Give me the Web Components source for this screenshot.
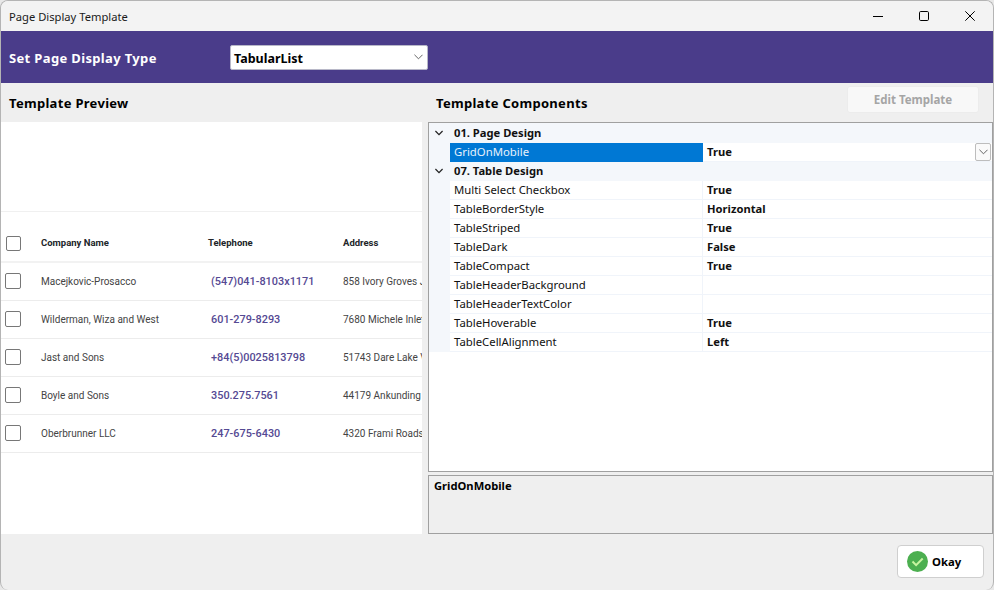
<!DOCTYPE html>
<html><head><meta charset="utf-8"><style>
html,body{margin:0;padding:0;background:#e8e8e8;width:994px;height:590px;overflow:hidden}
</style></head><body>
<app-window>
<title-bar slot="title">Page Display Template</title-bar>
<type-band slot="band" label="Set Page Display Type" value="TabularList"></type-band>
<section-head slot="lhead" style="--pl:8px">Template Preview</section-head>
<section-head slot="rhead" style="--pl:8px" action="Edit Template">Template Components</section-head>
<preview-table slot="preview">
<pv-row name="Macejkovic-Prosacco" tel="(547)041-8103x1171" addr="858 Ivory Groves Junction"></pv-row>
<pv-row name="Wilderman, Wiza and West" tel="601-279-8293" addr="7680 Michele Inlet Suite"></pv-row>
<pv-row name="Jast and Sons" tel="+84(5)0025813798" addr="51743 Dare Lake View"></pv-row>
<pv-row name="Boyle and Sons" tel="350.275.7561" addr="44179 Ankunding Hills"></pv-row>
<pv-row name="Oberbrunner LLC" tel="247-675-6430" addr="4320 Frami Roads Suite"></pv-row>
</preview-table>
<prop-grid slot="grid">
<prop-group style="--h:20px;--pb:1px">01. Page Design</prop-group>
<prop-row name="GridOnMobile" value="True" selected></prop-row>
<prop-group style="--pb:2px">07. Table Design</prop-group>
<prop-row name="Multi Select Checkbox" value="True"></prop-row>
<prop-row name="TableBorderStyle" value="Horizontal"></prop-row>
<prop-row name="TableStriped" value="True"></prop-row>
<prop-row name="TableDark" value="False"></prop-row>
<prop-row name="TableCompact" value="True"></prop-row>
<prop-row name="TableHeaderBackground" value=""></prop-row>
<prop-row name="TableHeaderTextColor" value=""></prop-row>
<prop-row name="TableHoverable" value="True"></prop-row>
<prop-row name="TableCellAlignment" value="Left"></prop-row>
</prop-grid>
<desc-panel slot="desc">GridOnMobile</desc-panel>
<ok-button slot="foot">Okay</ok-button>
</app-window>
<script>
const UI='"Noto Sans","Open Sans",sans-serif';
function def(name,html){
  customElements.define(name,class extends HTMLElement{
    connectedCallback(){
      if(this.shadowRoot)return;
      const r=this.attachShadow({mode:'open'});
      r.innerHTML=typeof html==='function'?html(this):html;
    }
  });
}
const chev=(w=10,c='#555',sw=1)=>`<svg width="${w}" height="6" viewBox="0 0 10 6" style="display:block"><path d="M.5.5 5 5 9.5.5" fill="none" stroke="${c}" stroke-width="${sw}"/></svg>`;
def('app-window',`<style>
:host{display:grid;box-sizing:border-box;width:994px;height:590px;background:#efefef;border:1px solid #b4b4b4;border-bottom:0;border-radius:8px;overflow:hidden;
grid-template-columns:421px 6px 565px;grid-template-rows:30px 52px 39px 350px 3px 59px 1fr;font-family:${UI};color:#000}
::slotted([slot=title]),::slotted([slot=band]){grid-column:1/-1}
::slotted([slot=lhead]){grid-column:1;grid-row:3}
::slotted([slot=rhead]){grid-column:3;grid-row:3}
::slotted([slot=preview]){grid-column:1;grid-row:4/7}
::slotted([slot=grid]){grid-column:3;grid-row:4}
::slotted([slot=desc]){grid-column:3;grid-row:6}
::slotted([slot=foot]){grid-column:1/-1;grid-row:7}
</style><slot name="title"></slot><slot name="band"></slot><slot name="lhead"></slot><slot name="rhead"></slot><slot name="preview"></slot><slot name="grid"></slot><slot name="desc"></slot><slot name="foot"></slot>`);
def('title-bar',`<style>
:host{display:flex;align-items:center;background:#f3f3f3;padding-left:8px;font-size:11.2px;color:#1a1a1a}
.t{flex:1}
.c{display:flex}
.b{width:46px;height:30px;display:flex;align-items:center;justify-content:center}
</style><span class="t"><slot></slot></span><div class="c">
<div class="b"><svg width="10" height="10"><path d="M0 5.5h10" stroke="#000"/></svg></div>
<div class="b"><svg width="10" height="10"><rect x=".5" y=".5" width="9" height="9" rx="1.2" fill="none" stroke="#000"/></svg></div>
<div class="b"><svg width="10" height="10"><path d="M.3.3l9.4 9.4M9.7.3.3 9.7" stroke="#000" stroke-width="1"/></svg></div></div>`);
def('type-band',e=>`<style>
:host{display:flex;align-items:center;background:#4a3c8a;padding-left:8px}
.l{width:221px;font-size:13px;font-weight:700;color:#fff;letter-spacing:.35px;padding-top:1px}
.s{box-sizing:border-box;width:198px;height:25px;background:#fff;border:1px solid #b8b8c8;border-radius:2px;display:flex;align-items:center;justify-content:space-between;padding:0 4px 0 3px;font-size:12.5px;font-weight:700;color:#000}
.s span{padding-top:2px}
</style><span class="l">${e.getAttribute('label')}</span><div class="s"><span>${e.getAttribute('value')}</span>${chev(9)}</div>`);
def('section-head',e=>`<style>
:host{display:flex;align-items:center;justify-content:space-between;padding-left:var(--pl);font-size:13px;font-weight:700;letter-spacing:.3px}
.a{box-sizing:border-box;width:132px;height:27px;margin-right:14px;margin-top:-7px;background:#f8f8f8;border:1px solid #ececec;border-radius:3px;display:flex;align-items:center;justify-content:center;font-size:11.5px;color:#a5a5a5;letter-spacing:0}
</style><span><slot></slot></span>${e.getAttribute('action')?`<div class="a">${e.getAttribute('action')}</div>`:''}`);
def('preview-table',`<style>
:host{display:block;background:#fff;overflow:hidden;font-family:Roboto,sans-serif;padding-top:89px}
.h{display:flex;align-items:center;height:37px;padding-top:12px;border-top:1px solid #f0f0f0;border-bottom:2px solid #f2f2f2;font-size:9.5px;font-weight:700;color:#212529}
.box{box-sizing:border-box;width:15px;height:15px;border:1.5px solid #777;border-radius:2px;margin-left:5px;margin-right:20px;flex:none;position:relative;top:1px}
.n{width:167px}.t{width:135px}
</style><div class="h"><span class="box"></span><span class="n">Company Name</span><span class="t">Telephone</span><span>Address</span></div><slot></slot>`);
def('pv-row',e=>`<style>
:host{display:flex;align-items:center;box-sizing:border-box;height:38px;border-bottom:1px solid #ececec;font-family:Roboto,sans-serif;font-size:10px;color:#444;white-space:nowrap;overflow:hidden}
.box{box-sizing:border-box;width:16px;height:16px;border:1.5px solid #777;border-radius:2px;margin:0 20px 2px 4px;flex:none}
.n{width:170px;flex:none}.t{width:132px;flex:none;font-size:10.9px;font-weight:500;color:#554993}
</style><span class="box"></span><span class="n">${e.getAttribute('name')}</span><span class="t">${e.getAttribute('tel')}</span><span>${e.getAttribute('addr')}</span>`);
def('prop-grid',`<style>
:host{display:block;box-sizing:border-box;background:#fff;border:1px solid #a0a0a0;overflow:hidden}
</style><slot></slot>`);
def('prop-group',`<style>
:host{display:flex;align-items:center;box-sizing:border-box;height:var(--h,19px);padding-bottom:var(--pb,1px);background:#f4f7fb;font-size:11.2px;font-weight:700;color:#111}
.g{width:25px;display:flex;justify-content:center;padding-right:6px;box-sizing:border-box}
</style><div class="g">${chev(8,'#222',1.6)}</div><span><slot></slot></span>`);
def('prop-row',e=>{const s=e.hasAttribute('selected');return `<style>
:host{display:flex;height:19px;font-size:11.35px;color:#111;position:relative}
.g{width:21px;background:#f4f7fb;flex:none}
.n{box-sizing:border-box;width:253px;padding-left:4px;line-height:18px;height:19px;border-bottom:1px solid #f0f4fa;border-right:1px solid #f0f4fa;flex:none;${s?'background:#0078d4;color:#e6f1fb;border-color:#0078d4;':''}}
.v{flex:1;padding-left:4px;line-height:18px;height:19px;box-sizing:border-box;font-size:11.2px;font-weight:700;border-bottom:1px solid #f0f4fa}
.d{position:absolute;right:1px;top:0;box-sizing:border-box;width:16px;height:18px;background:#fafafa;border:1px solid #bdbdbd;border-radius:2px;display:flex;align-items:center;justify-content:center}
</style><div class="g"></div><div class="n">${e.getAttribute('name')}</div><div class="v">${e.getAttribute('value')}</div>${s?`<div class="d">${chev(9)}</div>`:''}`});
def('desc-panel',`<style>
:host{display:block;box-sizing:border-box;border:1px solid #a0a0a0;background:#efefef;padding:2px 5px;font-size:11.2px;font-weight:700}
</style><slot></slot>`);
def('ok-button',`<style>
:host{display:flex;justify-content:flex-end;align-items:flex-start;padding:11px 9px 0 0}
.b{box-sizing:border-box;width:87px;height:33px;background:#fff;border:1px solid #cfcfcf;border-radius:4px;display:flex;align-items:center;padding-left:9px;gap:4px;font-size:11.3px;font-weight:700}
</style><div class="b"><svg width="21" height="21" viewBox="0 0 21 21"><circle cx="10.5" cy="10.5" r="10.5" fill="#4caf50"/><path d="M5.5 10.5l3.6 3.6 6.6-6.6" fill="none" stroke="#c8f5a0" stroke-width="2"/></svg><slot></slot></div>`);
</script>
</body></html>
